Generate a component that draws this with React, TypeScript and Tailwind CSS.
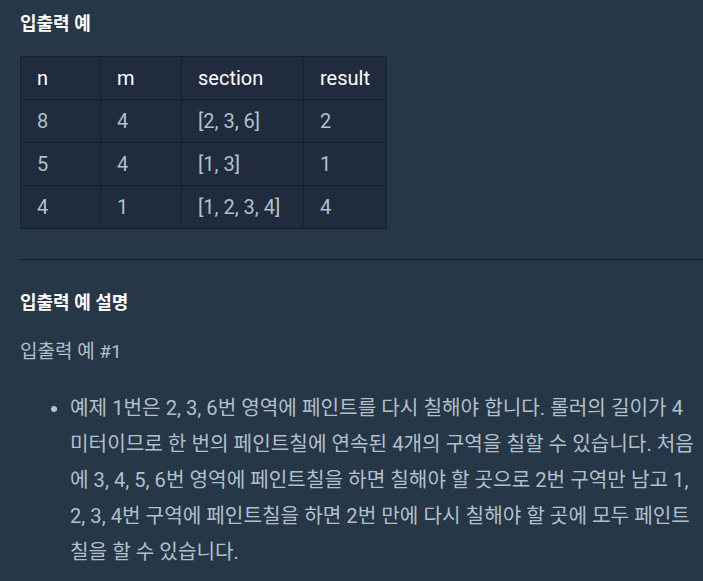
import React from "react";

const rows = [
  ["8", "4", "[2, 3, 6]", "2"],
  ["5", "4", "[1, 3]", "1"],
  ["4", "1", "[1, 2, 3, 4]", "4"],
];

export default function App() {
  return (
    <div
      className="min-h-[581px] w-[703px] bg-[#263747] pl-[20px] pr-[20px] pt-[10px] text-[#b2c0cc]"
      style={{ fontFamily: 'Roboto, "Noto Sans CJK KR", sans-serif' }}
    >
      <h5 className="text-[18px] font-bold leading-[28px] text-white">입출력 예</h5>
      <table className="mt-[18px] border-collapse border border-[#172030] bg-[#202b3d] text-[20px]">
        <thead>
          <tr className="h-[43px] text-white">
            <th className="w-[80px] border border-[#172030] px-[16px] text-left font-normal">n</th>
            <th className="w-[81px] border border-[#172030] px-[16px] text-left font-normal">m</th>
            <th className="w-[122px] border border-[#172030] px-[16px] text-left font-normal">section</th>
            <th className="w-[83px] border border-[#172030] px-[16px] text-left font-normal">result</th>
          </tr>
        </thead>
        <tbody>
          {rows.map((r, i) => (
            <tr key={i} className="h-[43px]">
              {r.map((c, j) => (
                <td key={j} className="border border-[#172030] px-[16px]">
                  {c}
                </td>
              ))}
            </tr>
          ))}
        </tbody>
      </table>
      <hr className="mt-[30px] mr-[-20px] border-t border-[#172030]" />
      <h5 className="mt-[29px] text-[18px] font-bold leading-[28px] text-white">입출력 예 설명</h5>
      <p className="mt-[21px] text-[19px] leading-[28px]">입출력 예 #1</p>
      <ul className="mt-[24px] mr-[-20px] list-disc pl-[50px] text-[20.2px] leading-[36px]">
        <li>
          예제 1번은 2, 3, 6번 영역에 페인트를 다시 칠해야 합니다. 롤러의 길이가 4 미터이므로 한 번의
          페인트칠에 연속된 4개의 구역을 칠할 수 있습니다. 처음에 3, 4, 5, 6번 영역에 페인트칠을 하면
          칠해야 할 곳으로 2번 구역만 남고 1, 2, 3, 4번 구역에 페인트칠을 하면 2번 만에 다시 칠해야 할
          곳에 모두 페인트칠을 할 수 있습니다.
        </li>
      </ul>
    </div>
  );
}
